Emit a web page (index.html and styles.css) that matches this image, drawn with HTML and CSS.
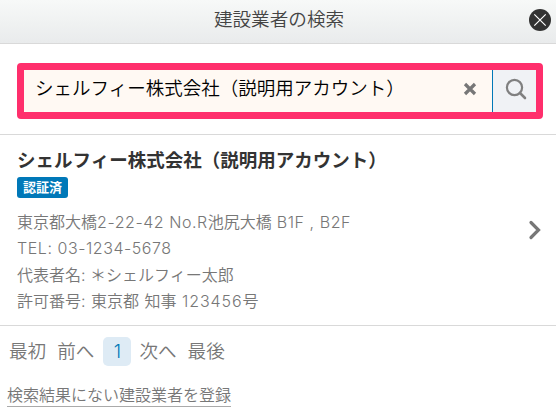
FILE: index.html
```
<!DOCTYPE html>
<html lang="ja">
<head>
    <meta charset="UTF-8">
    <meta name="viewport" content="width=device-width, initial-scale=1.0">
    <title>建設業者の検索</title>
    <link rel="stylesheet" href="styles.css">
</head>
<body>
    <header class="header">
        <h1>建設業者の検索</h1>
        <button class="close" aria-label="閉じる">
            <svg width="22" height="22" viewBox="0 0 22 22">
                <circle cx="11" cy="11" r="11" fill="#333"/>
                <path d="M5.3 5.3l11.4 11.4M16.7 5.3L5.3 16.7" stroke="#fff" stroke-width="1.2"/>
            </svg>
        </button>
    </header>
    <div class="search">
        <div class="search-box">
            <span class="keyword">シェルフィー株式会社（説明用アカウント）</span>
            <button class="clear" aria-label="クリア">
                <svg width="14" height="14" viewBox="0 0 14 14">
                    <path d="M2 2l10 10M12 2l-10 10" stroke="#777" stroke-width="3.2"/>
                </svg>
            </button>
            <button class="submit" aria-label="検索">
                <svg width="22" height="22" viewBox="0 0 22 22" fill="none" stroke="#808080">
                    <circle cx="9.5" cy="9.5" r="7.6" stroke-width="2.2"/>
                    <path d="M15 15l5 5" stroke-width="2.6" stroke-linecap="round"/>
                </svg>
            </button>
        </div>
    </div>
    <a class="company">
        <div class="company-body">
            <h2>シェルフィー株式会社（説明用アカウント）</h2>
            <span class="badge">認証済</span>
            <ul class="info">
                <li>東京都大橋<span class="latin">2-22-42 No.R</span>池尻大橋<span class="latin"> B1F , B2F</span></li>
                <li><span class="latin">TEL: 03-1234-5678</span></li>
                <li>代表者名: ＊シェルフィー太郎</li>
                <li class="license">許可番号: 東京都 知事 <span class="number">123456</span>号</li>
            </ul>
        </div>
        <svg class="arrow" width="14" height="20" viewBox="0 0 14 20">
            <path d="M3 2.5l7.5 7.5L3 17.5" fill="none" stroke="#777" stroke-width="3.2" stroke-linecap="round"/>
        </svg>
    </a>
    <nav class="pager">
        <a>最初</a>
        <a>前へ</a>
        <a class="current">1</a>
        <a>次へ</a>
        <a>最後</a>
    </nav>
    <a class="register">検索結果にない建設業者を登録</a>
</body>
</html>
```
FILE: styles.css
```
* {
    margin: 0;
    padding: 0;
    box-sizing: border-box;
}

body {
    font-family: "Noto Sans CJK JP", sans-serif;
    font-weight: 350;
    color: #333;
    background: #fff;
}

button {
    display: flex;
    align-items: center;
    justify-content: center;
    border: 0;
    background: none;
}

li {
    list-style: none;
}

.header {
    display: grid;
    grid-template-columns: 1fr auto 1fr;
    align-items: center;
    height: 44px;
    padding: 0 5px 4px 7px;
    border-bottom: 1px solid #d9d9d9;
    background: linear-gradient(#f7f9f8, #e9ebec);
}

.header h1 {
    grid-column: 2;
    padding-bottom: 4px;
    font-size: 18.6px;
    font-weight: 350;
    line-height: 28px;
    color: #444;
}

.close {
    justify-self: end;
}

.search {
    padding: 19px 13px 15px 17px;
    border-bottom: 1px solid #d9d9d9;
}

.search-box {
    display: flex;
    height: 56px;
    border: 7px solid #ff2f6c;
    border-radius: 4px;
    background: #fff9f3;
}

.keyword {
    flex: 1;
    padding-left: 11px;
    font-size: 18.5px;
    line-height: 35px;
    color: #000;
}

.clear {
    width: 44px;
    padding-bottom: 4px;
}

.submit {
    width: 44px;
    padding: 0 0 4px 2px;
    border-left: 1px solid #0078b8;
    background: #f0f2f5;
}

.company {
    display: flex;
    align-items: center;
    justify-content: space-between;
    height: 191px;
    padding: 0 14px 0 17px;
    border-bottom: 1px solid #d9d9d9;
}

.company h2 {
    font-size: 18.5px;
    font-weight: 700;
    line-height: 26px;
}

.badge {
    display: block;
    width: 51px;
    height: 21px;
    margin-top: 5px;
    border-radius: 3px;
    font-size: 13px;
    font-weight: 700;
    line-height: 20px;
    text-align: center;
    color: #fff;
    background: #0078b8;
}

.info {
    margin-top: 11px;
    font-family: Inter, "Noto Sans CJK JP", sans-serif;
    font-weight: 350;
    font-size: 16px;
    line-height: 26.3px;
    color: #777;
}

.latin {
    letter-spacing: 0.55px;
}

.license {
    word-spacing: 1px;
}

.number {
    letter-spacing: 0.9px;
}

.pager {
    display: flex;
    align-items: center;
    gap: 11px;
    height: 52px;
    padding: 0 0 2px 9px;
    font-size: 18.6px;
    line-height: 26px;
    color: #777;
}

.pager a {
    height: 29px;
}

.pager .current {
    width: 28px;
    margin: 0 -3px 0 -2px;
    border-radius: 5px;
    font-family: Inter, sans-serif;
    font-weight: 300;
    line-height: 28px;
    text-align: center;
    color: #0078b8;
    background: #deebf5;
}

.register {
    display: inline-block;
    height: 23px;
    margin: 6px 0 0 7px;
    border-bottom: 1px solid #aaa;
    font-size: 16px;
    line-height: 20px;
    color: #777;
}
```
